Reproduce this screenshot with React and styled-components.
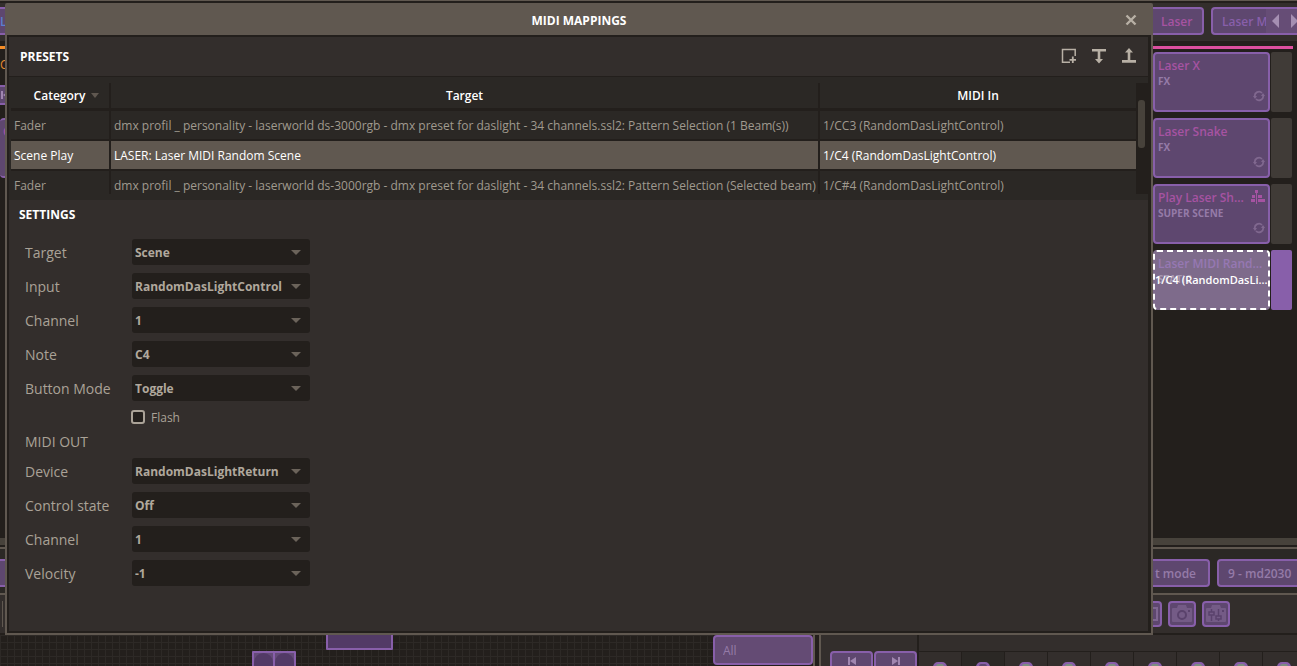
import React, { useState } from "react";
import styled, { createGlobalStyle } from "styled-components";

const c = {
  dark: "#231f1c",
  panel: "#332e2c",
  cell: "#2b2825",
  edge: "#605850",
  muted: "#aaa297",
  purple: "#885faa",
  purpleFill: "#5e476f",
  purpleText: "#957ba8",
  magenta: "#a653a2",
};

const Global = createGlobalStyle`
  *, *::before, *::after { box-sizing: border-box; }
  body {
    margin: 0;
    background: ${c.dark};
    font-family: "Open Sans", "Noto Sans", sans-serif;
    font-size: 12px;
    color: ${c.muted};
  }
  button, select, input { font: inherit; color: inherit; margin: 0; }
`;

const Workspace = styled.div`
  position: relative;
  height: 100vh;
  overflow: hidden;
  display: flex;
  flex-direction: column;
  background: ${c.dark};
  border-top: 1px solid ${c.edge};
`;

const TabBar = styled.div`
  display: flex;
  justify-content: space-between;
  margin-top: 2px;
  padding: 4px 0 6px;
  background: ${c.panel};
`;

const TabGroup = styled.div`
  display: flex;
  gap: 7px;
  width: ${(p) => p.$width};
  overflow: hidden;
`;

const PadButton = styled.button`
  flex: none;
  display: flex;
  align-items: center;
  justify-content: ${(p) => p.$align || "center"};
  width: ${(p) => p.$width || "auto"};
  height: ${(p) => p.$height || "28px"};
  padding: 0 ${(p) => p.$pad || "8px"};
  white-space: nowrap;
  overflow: hidden;
  font-weight: 600;
  color: ${(p) => p.$color || c.purpleText};
  background: ${c.purpleFill};
  border: 2px solid ${c.purple};
  border-left-width: ${(p) => (p.$cut ? 0 : "2px")};
  border-radius: ${(p) => (p.$cut ? "0 4px 4px 0" : "4px")};
`;

const TabWithArrows = styled.div`
  flex: 1;
  display: flex;
  height: 28px;
  background: ${c.purpleFill};
  border: 2px solid ${c.purple};
  border-right: 0;
  border-radius: 4px 0 0 4px;
  overflow: hidden;
`;

const CutTab = styled.button`
  flex: none;
  width: 53px;
  padding: 0 0 0 9px;
  border: 0;
  background: none;
  color: ${c.purple};
  font-weight: 600;
  text-align: left;
  white-space: nowrap;
  overflow: hidden;
`;

const ArrowButton = styled.button`
  flex: none;
  width: 19px;
  padding: 0;
  display: flex;
  align-items: center;
  justify-content: center;
  border: 0;
  background: #664d76;
`;

const Decks = styled.div`
  flex: 1;
  display: flex;
  justify-content: space-between;
  border-bottom: 7px solid #47423b;
  padding-top: 5px;
`;

const Deck = styled.section`
  width: ${(p) => p.$width};
  overflow: hidden;
`;

const Accent = styled.div`
  height: 3px;
  margin-right: ${(p) => p.$inset || 0};
  background: ${(p) => p.$color};
`;

const DeckName = styled.div`
  height: 36px;
  padding-top: 7px;
  line-height: 18px;
  color: #e58a2e;
`;

const SceneList = styled.div`
  display: flex;
  flex-direction: column;
  gap: 6px;
  padding-top: ${(p) => p.$top};
  padding-right: ${(p) => p.$inset || 0};
`;

const SceneRow = styled.div`
  display: flex;
  gap: 1px;
`;

const SceneCard = styled.button`
  width: 117px;
  height: 60px;
  flex: none;
  position: relative;
  padding: 2px 3px 8px;
  display: flex;
  flex-direction: column;
  align-items: stretch;
  text-align: left;
  color: ${(p) => (p.$active ? "#9678b3" : c.magenta)};
  background: ${(p) => (p.$active ? "#7e6b8b" : c.purpleFill)};
  border: 2px ${(p) => (p.$active ? "dashed #ffffff" : `solid ${c.purple}`)};
  border-left-width: ${(p) => (p.$cut ? 0 : "2px")};
  border-radius: 4px;
`;

const SceneTitle = styled.span`
  display: flex;
  justify-content: space-between;
  align-items: center;
  height: 18px;
  font-weight: 600;
  white-space: nowrap;
`;

const SceneKind = styled.span`
  height: 14px;
  line-height: 14px;
  font-size: 10px;
  font-weight: 700;
  color: ${(p) => (p.$dim ? "#a698b2" : c.purpleText)};
`;

const MappingTag = styled.span`
  position: absolute;
  left: 0;
  top: 20px;
  line-height: 16px;
  font-size: 11px;
  font-weight: 600;
  color: #ffffff;
  white-space: nowrap;
`;

const LoopMark = styled.span`
  display: flex;
  justify-content: flex-end;
  margin-top: auto;
  color: #80688f;
`;

const SceneFader = styled.div`
  flex: 1;
  border-radius: 2px;
  background: ${(p) => (p.$active ? c.purple : "#403b37")};
`;

const FixtureBar = styled.div`
  display: flex;
  justify-content: space-between;
  margin-top: 2px;
  padding: 10px 0 6px;
  background: ${c.cell};
  border-top: 2px solid ${c.edge};
`;

const ToolBar = styled.div`
  display: flex;
  justify-content: space-between;
  padding: 6px 0;
  height: 40px;
  background: ${c.panel};
  border-top: 2px solid ${c.edge};
`;

const ToolGroup = styled.div`
  display: flex;
  gap: 6px;
  width: 144px;
  overflow: hidden;
`;

const ToolButton = styled.button`
  flex: none;
  width: ${(p) => p.$width || "28px"};
  height: 26px;
  padding: 0;
  display: flex;
  align-items: center;
  justify-content: ${(p) => (p.$cut ? "flex-start" : "center")};
  overflow: hidden;
  background: ${c.purpleFill};
  border: 2px solid ${c.purple};
  border-left-width: ${(p) => (p.$cut ? 0 : "2px")};
  border-radius: ${(p) => (p.$cut ? "0 4px 4px 0" : "4px")};
`;

const Divider = styled.div`
  width: 1px;
  margin-left: 2px;
  background: ${c.edge};
`;

const Bottom = styled.div`
  display: flex;
  height: 33px;
  flex: none;
  border-top: 2px solid ${c.dark};
  background: ${c.panel};
`;

const Stage = styled.div`
  flex: 1;
  position: relative;
  overflow: hidden;
  background-color: #231f1c;
  background-image: linear-gradient(#2d2926 1px, transparent 1px),
    linear-gradient(90deg, #2d2926 1px, transparent 1px);
  background-size: 7px 7px;
`;

const Fixture = styled.div`
  position: absolute;
  left: ${(p) => p.$x}px;
  top: ${(p) => p.$y}px;
  width: ${(p) => p.$w}px;
  height: ${(p) => p.$h}px;
  display: flex;
  background: #523a66;
  border: 2px solid ${c.purple};
  border-radius: 1px;
`;

const FixtureHead = styled.div`
  flex: 1;
  background: #644b78;
  & + & { border-left: 2px solid ${c.purple}; }
  &::after {
    content: "";
    display: block;
    height: 30px;
    border-radius: 10px 10px 0 0;
    background: #523a66;
  }
`;

const GroupColumn = styled.div`
  width: 100px;
  background: ${c.dark};
`;

const GroupField = styled.input`
  width: 100%;
  height: 30px;
  padding: 0 8px;
  color: ${c.purpleText};
  background: #644b74;
  border: 2px solid ${c.purple};
  border-radius: 4px;
`;

const Splitter = styled.div`
  width: 8px;
  background: ${c.dark};
  border: solid ${c.edge};
  border-width: 0 2px;
`;

const Transport = styled.div`
  width: 98px;
  display: flex;
  gap: 1px;
  padding: 16px 0 0 9px;
  border-right: 2px solid ${c.dark};
`;

const Timeline = styled.div`
  width: 378px;
  display: flex;
  margin-top: 16px;
  border-top: 1px solid ${c.dark};
  overflow: hidden;
`;

const Channel = styled.div`
  flex: none;
  width: 43px;
  padding: 10px 14px 0;
  background: ${(p) => (p.$on ? c.cell : c.panel)};
  border-right: 1px solid ${c.dark};
  &::after {
    content: "";
    display: block;
    height: 14px;
    border: solid ${c.purple};
    border-width: 2px 3px;
    border-radius: 5px;
    background: ${(p) => (p.$on ? c.purpleFill : "#7c8f7f")};
  }
`;

const Dialog = styled.div`
  position: absolute;
  z-index: 2;
  top: 2px;
  left: 5px;
  right: 144px;
  bottom: 31px;
  display: flex;
  flex-direction: column;
  background: ${c.panel};
  border: 2px solid ${c.edge};
  border-top: 0;
  border-radius: 2px 2px 0 0;
`;

const TitleBar = styled.header`
  display: flex;
  align-items: center;
  height: 32px;
  flex: none;
  padding: 2px 8px 0 32px;
  background: ${c.edge};
`;

const Title = styled.h1`
  flex: 1;
  margin: 0;
  text-align: center;
  font-size: 12px;
  font-weight: 700;
  color: #ffffff;
`;

const IconButton = styled.button`
  display: flex;
  align-items: center;
  justify-content: center;
  width: ${(p) => p.$width || "30px"};
  height: 24px;
  padding: 0;
  border: 0;
  background: none;
  color: #b8b0a5;
`;

const DialogBody = styled.div`
  flex: 1;
  border: solid ${c.dark};
  border-width: 2px 3px 2px 2px;
`;

const PresetHead = styled.div`
  display: flex;
  align-items: center;
  justify-content: space-between;
  height: 40px;
  padding: 0 4px 0 11px;
  border-bottom: 1px solid ${c.dark};
`;

const SectionTitle = styled.h2`
  margin: 0;
  font-size: 12px;
  line-height: 28px;
  font-weight: 700;
  color: #ffffff;
`;

const Actions = styled.div`
  display: flex;
  padding-bottom: 2px;
`;

const TableArea = styled.div`
  display: flex;
  height: 123px;
  padding: 6px 0 6px 2px;
  background: ${c.cell};
`;

const TableClip = styled.div`
  flex: 1;
  overflow: hidden;
`;

const Table = styled.table`
  width: 100%;
  table-layout: fixed;
  border-collapse: separate;
  border-spacing: 0;
`;

const Th = styled.th`
  height: 28px;
  padding: 0 0 0 ${(p) => p.$indent || 0};
  width: ${(p) => p.$width || "auto"};
  font-weight: 600;
  color: #ffffff;
  border-bottom: 3px solid ${c.dark};
  border-right: ${(p) => (p.$last ? 0 : `2px solid ${c.dark}`)};
`;

const SortMark = styled.svg`
  margin: 0 0 2px 6px;
  vertical-align: middle;
`;

const Td = styled.td`
  height: 30px;
  padding: 1px 0 0 3px;
  white-space: nowrap;
  overflow: hidden;
  border-bottom: 2px solid ${c.dark};
  border-right: ${(p) => (p.$last ? 0 : `2px solid ${c.dark}`)};
`;

const Row = styled.tr`
  color: ${(p) => (p.$selected ? "#ffffff" : "#a09a8f")};
  background: ${(p) => (p.$selected ? c.edge : c.cell)};
`;

const ScrollTrack = styled.div`
  width: 12px;
  padding: 17px 3px 0 2px;
  background: ${c.dark};
`;

const ScrollThumb = styled.div`
  height: 48px;
  border-radius: 3px;
  background: #47423b;
`;

const Settings = styled.section`
  padding: 1px 0 0 10px;
`;

const Form = styled.form`
  display: flex;
  flex-direction: column;
  gap: 8px;
  padding: 10px 0 0 6px;
`;

const Field = styled.label`
  display: flex;
  align-items: center;
  height: 26px;
  font-size: 14px;
`;

const FieldName = styled.span`
  width: 107px;
`;

const SelectBox = styled.span`
  display: grid;
  width: 178px;
  align-items: center;
  > * { grid-area: 1 / 1; }
  > svg { justify-self: end; margin-right: 9px; pointer-events: none; }
`;

const Select = styled.select`
  appearance: none;
  width: 100%;
  height: 26px;
  padding: 0 0 0 3px;
  font-size: 12px;
  font-weight: 700;
  color: #b0a89d;
  background: ${c.dark};
  border: 0;
  border-radius: 3px;
`;

const CheckField = styled.label`
  display: flex;
  align-items: center;
  gap: 6px;
  height: 16px;
  margin-left: 106px;
`;

const Check = styled.input`
  appearance: none;
  width: 14px;
  height: 14px;
  background: ${c.dark};
  border: 2px solid ${c.muted};
  border-radius: 3px;
`;

const FormHeading = styled.h3`
  margin: 0;
  height: 17px;
  line-height: 17px;
  font-size: 14px;
  font-weight: 400;
`;

const LoopIcon = () => (
  <svg width="12" height="12" viewBox="0 0 12 12" fill="none" stroke="currentColor" strokeWidth="1.800">
    <path d="M1.800 6.500A4.200 4.200 0 0 1 9 3" />
    <path d="M10.200 5.500A4.200 4.200 0 0 1 3 9" />
    <path d="M0 6h4L2 9zM12 6H8l2-3z" fill="currentColor" stroke="none" />
  </svg>
);

const TimelineIcon = () => (
  <svg width="14" height="14" viewBox="0 0 14 14" fill="currentColor">
    <path d="M4 0h3v3H6v11H5V3H4zM1 5h3v3H1zM7 5h4v3H7zM0 9h4v3H0zM7 9h7v3H7z" />
  </svg>
);

const CameraIcon = ({ sliders }) => (
  <svg width="24" height="22" viewBox="0 0 24 22">
    <path d="M3 5h4l1-3h8l1 3h4q1 0 1 1v12q0 1-1 1H3q-1 0-1-1V6q0-1 1-1z" fill="#745b86" />
    {sliders ? (
      <g fill="#745b86" stroke="#5a426c" strokeWidth="1.500">
        <path d="M7.500 6v12M14.500 6v12" />
        <path d="M5 9h5v3H5zM12 13h5v3h-5z" />
      </g>
    ) : (
      <circle cx="12" cy="12" r="4" fill="none" stroke="#5a426c" strokeWidth="2" />
    )}
    <path d="M18 7h2v2h-2z" fill="#5a426c" />
  </svg>
);

const SkipIcon = ({ back }) => (
  <svg width="10" height="10" viewBox="0 0 10 10" fill="#a086b0">
    <path d={back ? "M1 1h2v8H1zM9 1v8L3 5z" : "M7 1h2v8H7zM1 1v8l6-4z"} />
  </svg>
);

const scenes = [
  { name: "Laser X", kind: "FX" },
  { name: "Laser Snake", kind: "FX" },
  { name: "Play Laser Sh...", kind: "SUPER SCENE", timeline: true },
  { name: "Laser MIDI Rand...", kind: "STATIC", active: true },
];

const profile = "dmx profil _ personality - laserworld ds-3000rgb - dmx preset for daslight - 34 channels.ssl2: Pattern Selection ";
const mappings = [
  ["Fader", profile + "(1 Beam(s))", "1/CC3 (RandomDasLightControl)"],
  ["Scene Play", "LASER: Laser MIDI Random Scene", "1/C4 (RandomDasLightControl)"],
  ["Fader", profile + "(Selected beam)", "1/C#4 (RandomDasLightControl)"],
];

const Picker = ({ name, value }) => (
  <Field>
    <FieldName>{name}</FieldName>
    <SelectBox>
      <Select defaultValue={value}>
        <option>{value}</option>
      </Select>
      <svg width="10" height="5" viewBox="0 0 10 5"><path d="M0 0h10L5 5z" fill="#6b635a" /></svg>
    </SelectBox>
  </Field>
);

const Scene = ({ name, kind, timeline, active }) => (
  <SceneRow>
    <SceneCard $active={active}>
      <SceneTitle>{name}{timeline && <TimelineIcon />}</SceneTitle>
      <SceneKind $dim={active}>{kind}</SceneKind>
      {active ? <MappingTag>1/C4 (RandomDasLi...</MappingTag> : <LoopMark><LoopIcon /></LoopMark>}
    </SceneCard>
    <SceneFader $active={active} />
  </SceneRow>
);

function MidiDialog() {
  const [selected, setSelected] = useState(1);
  return (
    <Dialog role="dialog" aria-labelledby="dialog-title">
      <TitleBar>
        <Title id="dialog-title">MIDI MAPPINGS</Title>
        <IconButton $width="24px" aria-label="Close">
          <svg width="12" height="12" viewBox="0 0 12 12" stroke="currentColor" strokeWidth="2.400">
            <path d="M1.500 1.500l9 9M10.500 1.500l-9 9" />
          </svg>
        </IconButton>
      </TitleBar>
      <DialogBody>
        <PresetHead>
          <SectionTitle>PRESETS</SectionTitle>
          <Actions>
            <IconButton aria-label="Add preset">
              <svg width="16" height="16" viewBox="0 0 16 16" fill="none" stroke="currentColor" strokeWidth="1.500">
                <path d="M9 14.200H1.500V1.500h12.700V8" />
                <path d="M11.800 8.500v6.500M8.500 11.800h6.500" strokeWidth="1.800" />
              </svg>
            </IconButton>
            <IconButton aria-label="Import">
              <svg width="16" height="16" viewBox="0 0 16 16" fill="currentColor">
                <path d="M1 1h14v2.500H1zM6.700 3h2.600v8H12l-4 4.500L4 11h2.700z" />
              </svg>
            </IconButton>
            <IconButton aria-label="Export">
              <svg width="16" height="16" viewBox="0 0 16 16" fill="currentColor">
                <path d="M8 0l4 4.500H9.300V12H15v2.700H1V12h5.700V4.500H4z" />
              </svg>
            </IconButton>
          </Actions>
        </PresetHead>
        <TableArea>
          <TableClip>
            <Table>
              <thead>
                <tr>
                  <Th $width="100px" $indent="13px">
                    Category
                    <SortMark width="8" height="5" viewBox="0 0 8 5"><path d="M0 0h8L4 5z" fill="#605850" /></SortMark>
                  </Th>
                  <Th>Target</Th>
                  <Th $width="316px" $last>MIDI In</Th>
                </tr>
              </thead>
              <tbody>
                {mappings.map(([kind, target, midi], i) => (
                  <Row key={midi} $selected={i === selected} onClick={() => setSelected(i)}>
                    <Td>{kind}</Td>
                    <Td>{target}</Td>
                    <Td $last>{midi}</Td>
                  </Row>
                ))}
              </tbody>
            </Table>
          </TableClip>
          <ScrollTrack><ScrollThumb /></ScrollTrack>
        </TableArea>
        <Settings>
          <SectionTitle>SETTINGS</SectionTitle>
          <Form>
            <Picker name="Target" value="Scene" />
            <Picker name="Input" value="RandomDasLightControl" />
            <Picker name="Channel" value="1" />
            <Picker name="Note" value="C4" />
            <Picker name="Button Mode" value="Toggle" />
            <CheckField><Check type="checkbox" />Flash</CheckField>
            <FormHeading>MIDI OUT</FormHeading>
            <Picker name="Device" value="RandomDasLightReturn" />
            <Picker name="Control state" value="Off" />
            <Picker name="Channel" value="1" />
            <Picker name="Velocity" value="-1" />
          </Form>
        </Settings>
      </DialogBody>
    </Dialog>
  );
}

export default function App() {
  return (
    <>
      <Global />
      <Workspace>
        <TabBar>
          <PadButton $width="40px" $align="flex-start" $color="#5a7fd0" $pad="0px" $cut>La</PadButton>
          <TabGroup $width="144px">
            <PadButton $width="51px" $color={c.magenta} $align="flex-start" $cut>Laser</PadButton>
            <TabWithArrows>
              <CutTab>Laser M</CutTab>
              <ArrowButton aria-label="Previous"><svg width="7" height="14"><path d="M7 0v14L0 7z" fill="#a58fb2" /></svg></ArrowButton>
              <ArrowButton aria-label="Next"><svg width="7" height="14"><path d="M0 0v14l7-7z" fill="#a58fb2" /></svg></ArrowButton>
            </TabWithArrows>
          </TabGroup>
        </TabBar>
        <Decks>
          <Deck $width="40px">
            <Accent $color="#f58d27" />
            <DeckName>C</DeckName>
            <PadButton $width="40px" $height="20px" $align="flex-start" $pad="0px" $cut aria-label="Rewind"><SkipIcon back /></PadButton>
            <SceneList $top="13px">
              <SceneCard $cut>
                <SceneTitle>C</SceneTitle>
              </SceneCard>
            </SceneList>
          </Deck>
          <Deck $width="144px">
            <Accent $color="#dc4f9f" $inset="4px" />
            <SceneList $top="3px" $inset="5px">
              {scenes.map((s) => <Scene key={s.name} {...s} />)}
            </SceneList>
          </Deck>
        </Decks>
        <FixtureBar>
          <PadButton $width="40px" $cut aria-label="Fixture" />
          <TabGroup $width="144px">
            <PadButton $width="57px" $align="flex-start" $pad="2px" $cut>t mode</PadButton>
            <PadButton $width="84px" $align="flex-start" $pad="9px">9 - md2030</PadButton>
          </TabGroup>
        </FixtureBar>
        <ToolBar>
          <Divider />
          <ToolGroup>
            <ToolButton $width="9px" $cut aria-label="Snapshot">
              <svg width="5" height="14" viewBox="0 0 5 14"><path d="M0 1h4v12H0" fill="none" stroke="#7f6691" strokeWidth="2" /></svg>
            </ToolButton>
            <ToolButton aria-label="Camera"><CameraIcon /></ToolButton>
            <ToolButton aria-label="Camera levels"><CameraIcon sliders /></ToolButton>
          </ToolGroup>
        </ToolBar>
        <Bottom>
          <Stage>
            <Fixture $x={252} $y={16} $w={44} $h={30}><FixtureHead /><FixtureHead /></Fixture>
            <Fixture $x={326} $y={-12} $w={67} $h={27} />
          </Stage>
          <GroupColumn><GroupField aria-label="Group" defaultValue="All" /></GroupColumn>
          <Splitter />
          <Transport>
            <PadButton $width="43px" $height="20px" aria-label="Previous cue"><SkipIcon back /></PadButton>
            <PadButton $width="43px" $height="20px" aria-label="Next cue"><SkipIcon /></PadButton>
          </Transport>
          <Timeline>
            {Array.from({ length: 9 }, (_, i) => <Channel key={i} $on={i === 1} />)}
          </Timeline>
        </Bottom>
        <MidiDialog />
      </Workspace>
    </>
  );
}
